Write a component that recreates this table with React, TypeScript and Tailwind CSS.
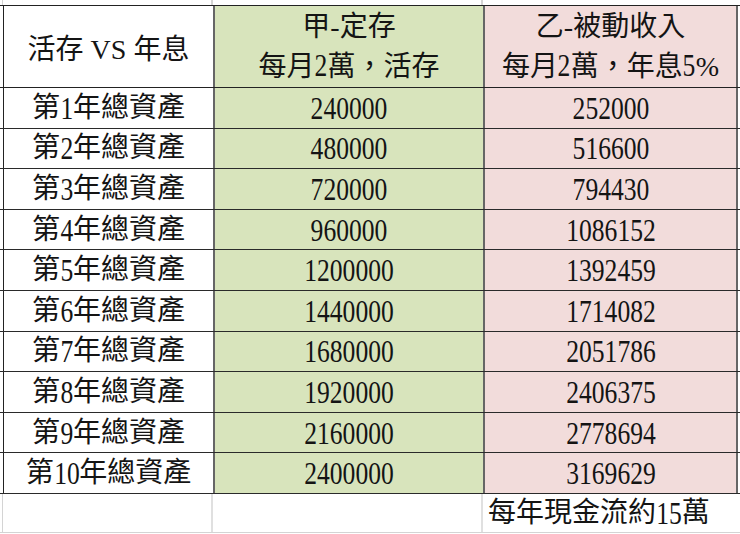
import React from 'react';

const rows = [
  ['第1年總資產', '240000', '252000'],
  ['第2年總資產', '480000', '516600'],
  ['第3年總資產', '720000', '794430'],
  ['第4年總資產', '960000', '1086152'],
  ['第5年總資產', '1200000', '1392459'],
  ['第6年總資產', '1440000', '1714082'],
  ['第7年總資產', '1680000', '2051786'],
  ['第8年總資產', '1920000', '2406375'],
  ['第9年總資產', '2160000', '2778694'],
  ['第10年總資產', '2400000', '3169629'],
];

// digits in the sheet are tall and narrow, so render them larger and squeeze them
function Txt({ s }: { s: string }) {
  const parts = s.split(/([0-9]+)/);
  return (
    <>
      {parts.map((p, i) =>
        /^[0-9]+$/.test(p) ? (
          <span
            key={i}
            className="inline-block text-[32px] leading-none scale-x-80"
            style={{ marginLeft: -p.length * 1.6, marginRight: -p.length * 1.6 }}
          >
            {p}
          </span>
        ) : (
          <React.Fragment key={i}>{p}</React.Fragment>
        )
      )}
    </>
  );
}

export default function App() {
  return (
    <div className="w-[740px] h-[534px] overflow-hidden bg-white text-[#141414] text-[28px] font-['Liberation_Serif','Noto_Sans_CJK_TC',serif]">
      {/* gridline strip above the table */}
      <div className="flex h-[5px]">
        <div className="w-[3px] shrink-0 border-r border-[#d4d4d4]" />
        <div className="w-[210px] shrink-0 border-r-2 border-[#d4d4d4]" />
        <div className="w-[270px] shrink-0 border-r-2 border-[#d4d4d4]" />
        <div className="w-[255px] shrink-0" />
      </div>

      {/* header */}
      <div className="flex h-[83px] border-t border-b border-[#222]">
        <div className="w-[3px] shrink-0" />
        <div className="w-[210px] shrink-0 border-l border-[#222] flex items-center justify-center pt-[6px] leading-[40px]">
          活存 VS 年息
        </div>
        <div className="w-[270px] shrink-0 border-l-2 border-[#666] bg-[#d8e4bc] flex flex-col items-center justify-center leading-[40px]">
          <div>甲-定存</div>
          <div><Txt s="每月2萬，活存" /></div>
        </div>
        <div className="w-[255px] shrink-0 border-l-2 border-r-2 border-[#666] bg-[#f2dcdb] flex flex-col items-center justify-center leading-[40px]">
          <div>乙-被動收入</div>
          <div><Txt s="每月2萬，年息5%" /></div>
        </div>
      </div>

      {rows.map(([label, a, b]) => (
        <div key={label} className="flex h-[40.6px] border-b border-[#2a2a2a]">
          <div className="w-[3px] shrink-0" />
          <div className="w-[210px] shrink-0 border-l border-[#222] flex items-center justify-center leading-[40px]">
            <Txt s={label} />
          </div>
          <div className="w-[270px] shrink-0 border-l-2 border-[#666] bg-[#d8e4bc] flex items-center justify-center leading-[40px]">
            <Txt s={a} />
          </div>
          <div className="w-[255px] shrink-0 border-l-2 border-r-2 border-[#666] bg-[#f2dcdb] flex items-center justify-center leading-[40px]">
            <Txt s={b} />
          </div>
        </div>
      ))}

      {/* note row below the table */}
      <div className="flex h-[39px] border-b border-[#d4d4d4]">
        <div className="w-[3px] shrink-0 border-r border-[#d4d4d4]" />
        <div className="w-[210px] shrink-0 border-r-2 border-[#e0e0e0]" />
        <div className="w-[270px] shrink-0 border-r-2 border-[#e0e0e0]" />
        <div className="w-[255px] shrink-0 flex items-center pl-[5px] leading-[40px] whitespace-nowrap">
          <Txt s="每年現金流約15萬" />
        </div>
      </div>
    </div>
  );
}
